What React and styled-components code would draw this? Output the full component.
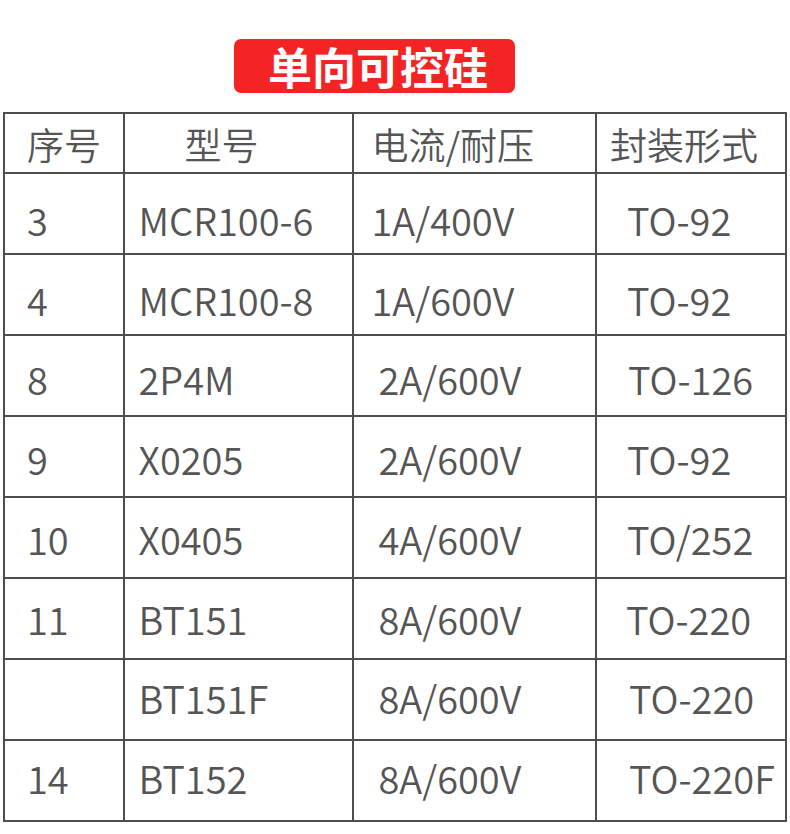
import React from 'react'
import styled, { createGlobalStyle } from 'styled-components'

const GlobalStyle = createGlobalStyle`
  html, body {
    margin: 0;
    padding: 0;
    background: #ffffff;
  }
  body {
    font-family: "Noto Sans CJK SC", "Noto Sans", sans-serif;
  }
`

const Page = styled.div`
  width: 790px;
  height: 834px;
  background: #fff;
  display: flex;
  flex-direction: column;
  align-items: flex-start;
  padding-top: 39px;
  box-sizing: border-box;
`

const TitleRow = styled.div`
  width: 100%;
  display: flex;
  padding-left: 234px;
  box-sizing: border-box;
`

const Title = styled.div`
  width: 281px;
  height: 54px;
  background: #f42424;
  border-radius: 7px;
  color: #fff;
  font-size: 44px;
  font-weight: 700;
  line-height: 54px;
  padding-left: 34px;
  box-sizing: border-box;
  white-space: nowrap;
`

const Grid = styled.div`
  margin-top: 19px;
  margin-left: 3px;
  display: grid;
  grid-template-columns: 119.5px 229px 243.5px 189.5px;
  grid-template-rows: 60px repeat(8, 81px);
  border-top: 2px solid #4d4d4d;
  border-left: 2px solid #4d4d4d;
`

const Cell = styled.div`
  border-right: 2px solid #4d4d4d;
  border-bottom: 2px solid #4d4d4d;
  display: flex;
  align-items: center;
  padding-left: ${p => p.$pad}px;
  padding-top: ${p => Math.max(0, p.$shift)}px;
  padding-bottom: ${p => Math.max(0, -p.$shift)}px;
  box-sizing: border-box;
  color: #555555;
  font-size: ${p => (p.$head ? 37 : 38)}px;
  font-weight: 350;
  line-height: 1;
  white-space: nowrap;
`

const head = [
  { text: '序号', pad: 22 },
  { text: '型号', pad: 60 },
  { text: '电流/耐压', pad: 18 },
  { text: '封装形式', pad: 13 },
]

// [序号, 型号, 电流/耐压, 封装, pad col3, pad col4, vertical shift]
const rows = [
  ['3', 'MCR100-6', '1A/400V', 'TO-92', 18, 30, 12],
  ['4', 'MCR100-8', '1A/600V', 'TO-92', 18, 30, 10],
  ['8', '2P4M', '2A/600V', 'TO-126', 25, 31, 7],
  ['9', 'X0205', '2A/600V', 'TO-92', 25, 30, 4],
  ['10', 'X0405', '4A/600V', 'TO/252', 25, 30, 3],
  ['11', 'BT151', '8A/600V', 'TO-220', 25, 29, 1],
  ['', 'BT151F', '8A/600V', 'TO-220', 25, 32, -4],
  ['14', 'BT152', '8A/600V', 'TO-220F', 25, 32, -5],
]

export default function App() {
  return (
    <>
      <GlobalStyle />
      <Page>
        <TitleRow>
          <Title>单向可控硅</Title>
        </TitleRow>
        <Grid>
          {head.map((h, i) => (
            <Cell key={'h' + i} $head $pad={h.pad} $shift={2}>{h.text}</Cell>
          ))}
          {rows.map((r, i) => (
            <React.Fragment key={i}>
              <Cell $pad={22} $shift={r[6]}>{r[0]}</Cell>
              <Cell $pad={14} $shift={r[6]}>{r[1]}</Cell>
              <Cell $pad={r[4]} $shift={r[6]}>{r[2]}</Cell>
              <Cell $pad={r[5]} $shift={r[6]}>{r[3]}</Cell>
            </React.Fragment>
          ))}
        </Grid>
      </Page>
    </>
  )
}
